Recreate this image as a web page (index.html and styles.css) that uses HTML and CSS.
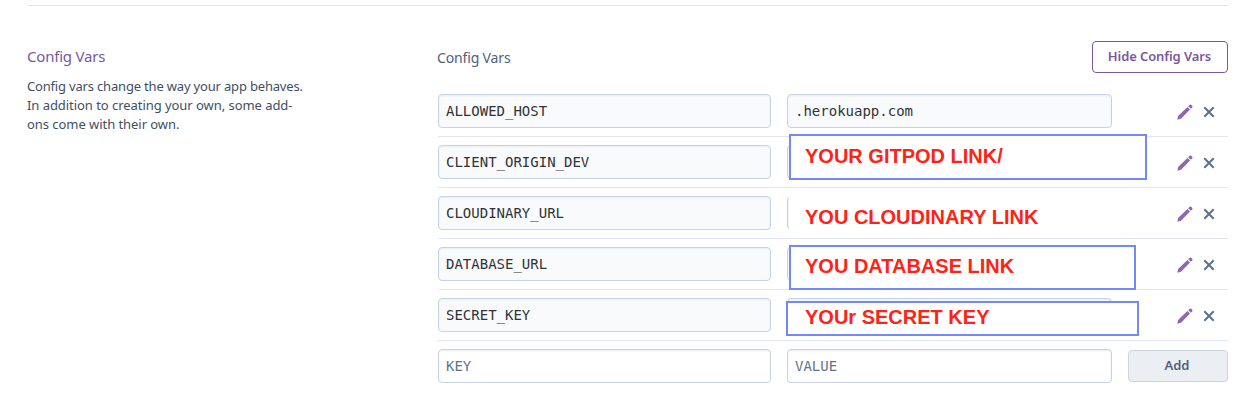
FILE: index.html
```html
<!DOCTYPE html>
<html lang="en">
<head>
<meta charset="utf-8">
<title>Config Vars</title>
<link rel="stylesheet" href="styles.css">
</head>
<body>
<svg class="sprite" width="0" height="0">
  <symbol id="pencil" viewBox="0 0 16 16">
    <path d="M0.3 15.8 1.1 12 10.4 3 13 5.6 4 14.7Z"/>
    <path d="M11.2 2.2 12.7.8Q13.5.2 14.2.8L15.3 1.9Q15.9 2.6 15.3 3.3L13.8 4.8Z"/>
  </symbol>
  <symbol id="cross" viewBox="0 0 12 12">
    <path d="M1.3 1.3 10.7 10.7M10.7 1.3 1.3 10.7"/>
  </symbol>
</svg>
<main class="settings">
  <aside class="intro">
    <h2 class="intro-title">Config Vars</h2>
    <p class="intro-text"><span class="line-tight">Config vars change the way your app behaves.</span><br>In addition to creating your own, some add-<br>ons come with their own.</p>
  </aside>
  <section class="vars">
    <header class="vars-head">
      <h3 class="vars-title">Config Vars</h3>
      <button class="btn-hide">Hide Config Vars</button>
    </header>
    <div class="row">
      <div class="field key">ALLOWED_HOST</div>
      <div class="field value">.herokuapp.com</div>
      <div class="actions"><svg class="pencil"><use href="#pencil"/></svg><svg class="cross"><use href="#cross"/></svg></div>
    </div>
    <div class="row">
      <div class="field key">CLIENT_ORIGIN_DEV</div>
      <div class="field value"></div>
      <div class="actions"><svg class="pencil"><use href="#pencil"/></svg><svg class="cross"><use href="#cross"/></svg></div>
      <div class="note note-gitpod">YOUR GITPOD LINK/</div>
    </div>
    <div class="row">
      <div class="field key">CLOUDINARY_URL</div>
      <div class="field value"></div>
      <div class="actions"><svg class="pencil"><use href="#pencil"/></svg><svg class="cross"><use href="#cross"/></svg></div>
      <div class="note note-cloudinary">YOU CLOUDINARY LINK</div>
    </div>
    <div class="row">
      <div class="field key">DATABASE_URL</div>
      <div class="field value"></div>
      <div class="actions"><svg class="pencil"><use href="#pencil"/></svg><svg class="cross"><use href="#cross"/></svg></div>
      <div class="note note-database">YOU DATABASE LINK</div>
    </div>
    <div class="row">
      <div class="field key">SECRET_KEY</div>
      <div class="field value"></div>
      <div class="actions"><svg class="pencil"><use href="#pencil"/></svg><svg class="cross"><use href="#cross"/></svg></div>
      <div class="note note-secret">YOUr SECRET KEY</div>
    </div>
    <div class="row row-new">
      <div class="field key">KEY</div>
      <div class="field value">VALUE</div>
      <button class="btn-add">Add</button>
    </div>
  </section>
</main>
</body>
</html>
```
FILE: styles.css
```css
* { box-sizing: border-box; }
body {
  margin: 0;
  height: 408px;
  overflow: hidden;
  background: #fff;
  color: #3f4f63;
  font-family: "Noto Sans", sans-serif;
}
h2, h3, p { margin: 0; font-weight: 400; }
.sprite { display: block; height: 0; }
.settings {
  display: grid;
  grid-template-columns: 410px 790px;
  margin: 5px 29px 0 28px;
  border-top: 1px solid #e3e5f1;
}
.intro { margin-left: -1px; padding-top: 39px; }
.intro-title {
  font-size: 15px;
  line-height: 22px;
  letter-spacing: -0.2px;
  color: #79589f;
}
.intro-text {
  margin-top: 10px;
  font-size: 13px;
  line-height: 19px;
  letter-spacing: -0.05px;
  white-space: nowrap;
}
.line-tight { letter-spacing: -0.18px; }
.vars-head {
  display: flex;
  justify-content: space-between;
  align-items: flex-start;
  height: 80px;
  padding-top: 35px;
}
.vars-title { margin: 6px 0 0 -1px; font-size: 14px; line-height: 22px; letter-spacing: -0.15px; color: #4f617b; }
.btn-hide, .btn-add {
  height: 32px;
  border-radius: 4px;
  font: 600 13px/28px "Noto Sans", sans-serif;
}
.btn-hide { width: 136px; padding: 0 1px 2px 0; border: 1px solid #79589f; background: #fff; color: #79589f; letter-spacing: -0.1px; }
.btn-add { width: 100px; margin-left: 16px; padding: 0 2px 2px 0; border: 1px solid #cbd4e3; background: #ebeef3; color: #51627b; }
.row {
  position: relative;
  display: flex;
  align-items: center;
  height: 51px;
  border-bottom: 1px solid #e3e5f1;
}
.row-new { border-bottom-color: transparent; }
.field {
  height: 34px;
  padding-left: 7px;
  border: 1px solid #c7d3e3;
  border-radius: 4px;
  background: #f9fafc;
  box-shadow: inset 0 1px 2px #e9edf3;
  color: #303338;
  font: 14px/32px "DejaVu Sans Mono", monospace;
}
.key { width: 333px; }
.value { width: 325px; margin-left: 16px; }
.row-new .field { background: #fff; color: #62748b; }
.actions { display: flex; align-items: center; margin-left: 65px; padding-top: 2px; gap: 10px; }
.actions svg { display: block; }
.pencil { width: 16px; height: 16px; fill: #8d68b0; }
.cross { width: 12px; height: 12px; fill: none; stroke: #5c708a; stroke-width: 2; }
.note {
  position: absolute;
  padding-left: 14px;
  border: 2px solid #7389f8;
  background: #fff;
  color: #ff2215;
  font: bold 20px/24px "Liberation Sans", Arial, sans-serif;
  white-space: nowrap;
}
.note-gitpod { left: 351px; top: -3px; width: 358px; height: 46px; padding-top: 8px; }
.note-cloudinary { left: 351px; top: 5px; width: 358px; height: 42px; padding-top: 10px; border-color: #fff; }
.note-database { left: 351px; top: 6px; width: 347px; height: 45px; padding-top: 7px; }
.note-secret { left: 348px; top: 11px; width: 353px; height: 35px; padding: 2px 0 0 17px; }
```
